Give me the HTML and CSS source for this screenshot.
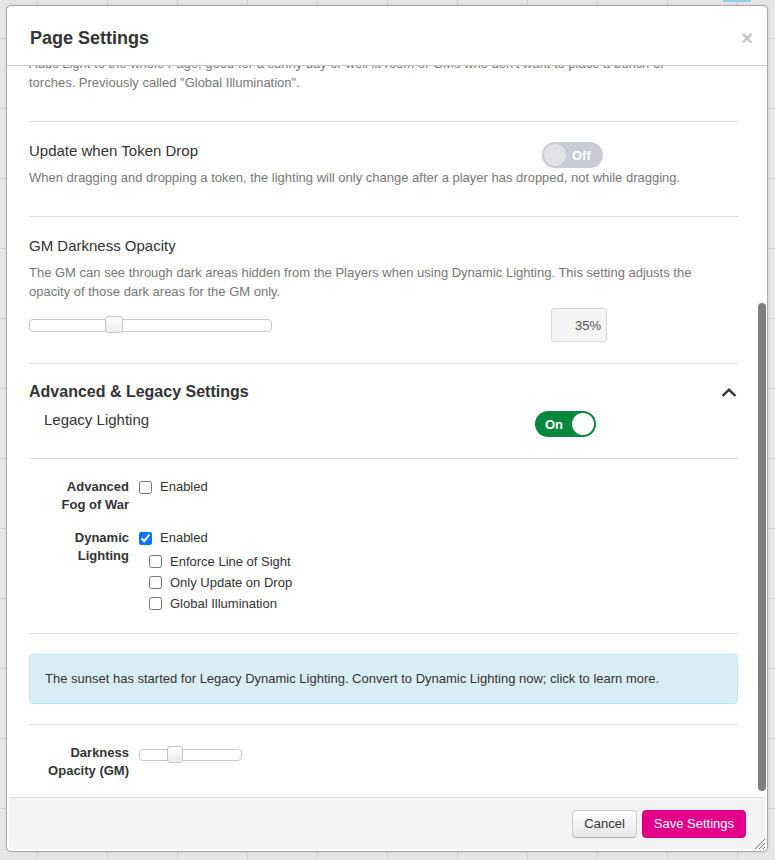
FILE: index.html
```html
<!DOCTYPE html>
<html lang="en">
<head>
  <meta charset="UTF-8" />
  <title>Page Settings</title>
  <link rel="stylesheet" href="styles.css">
</head>
<body>

  <div class="tab-mark"></div>

  <div class="dialog">
    <div class="dialog-head">
      <h1 class="dialog-title">Page Settings</h1>
      <span class="dialog-close">&times;</span>
    </div>

    <div class="dialog-body">
      <div class="scroll-content">

        <section class="setting">
          <p class="setting-desc">Adds Light to the whole Page, good for a sunny day or well lit room or GMs who don't want to place a bunch of torches. Previously called "Global Illumination".</p>
        </section>

        <section class="setting">
          <div class="setting-row">
            <h3 class="setting-title">Update when Token Drop</h3>
            <div class="toggle toggle-off"><span class="toggle-knob"></span><span class="toggle-label">Off</span></div>
          </div>
          <p class="setting-desc">When dragging and dropping a token, the lighting will only change after a player has dropped, not while dragging.</p>
        </section>

        <section class="setting">
          <div class="setting-row">
            <h3 class="setting-title">GM Darkness Opacity</h3>
          </div>
          <p class="setting-desc">The GM can see through dark areas hidden from the Players when using Dynamic Lighting. This setting adjusts the opacity of those dark areas for the GM only.</p>
          <div class="slider-row">
            <div class="slider">
              <span class="slider-handle" style="left: 35%"></span>
            </div>
            <input class="value-box" type="text" value="35%" readonly>
          </div>
        </section>

        <section class="setting">
          <div class="group-head">
            <h2 class="group-title">Advanced &amp; Legacy Settings</h2>
            <svg class="chevron" width="16" height="10" viewBox="0 0 16 10">
              <polyline points="1.5,9 8,2.6 14.5,9" fill="none" stroke="#333" stroke-width="2.4"/>
            </svg>
          </div>
          <div class="setting-row nested">
            <h3 class="setting-title">Legacy Lighting</h3>
            <div class="toggle toggle-on"><span class="toggle-label">On</span><span class="toggle-knob"></span></div>
          </div>
        </section>

        <section class="setting setting-form">
          <div class="field">
            <div class="field-label">Advanced<br>Fog of War</div>
            <div class="field-control">
              <label class="check"><input type="checkbox"> Enabled</label>
            </div>
          </div>
          <div class="field">
            <div class="field-label">Dynamic<br>Lighting</div>
            <div class="field-control">
              <label class="check"><input type="checkbox" checked> Enabled</label>
              <div class="sublist">
                <label class="check"><input type="checkbox"> Enforce Line of Sight</label>
                <label class="check"><input type="checkbox"> Only Update on Drop</label>
                <label class="check"><input type="checkbox"> Global Illumination</label>
              </div>
            </div>
          </div>
        </section>

        <section class="setting setting-alert">
          <div class="alert">The sunset has started for Legacy Dynamic Lighting. Convert to Dynamic Lighting now; click to learn more.</div>
        </section>

        <section class="setting setting-form setting-last">
          <div class="field">
            <div class="field-label">Darkness<br>Opacity (GM)</div>
            <div class="field-control">
              <div class="slider slider-sm">
                <span class="slider-handle" style="left: 35%"></span>
              </div>
            </div>
          </div>
        </section>

      </div>
      <div class="scroll-thumb"></div>
    </div>

    <div class="dialog-foot">
      <button class="btn btn-default" type="button">Cancel</button>
      <button class="btn btn-primary" type="button">Save Settings</button>
    </div>

    <svg class="resize-grip" width="12" height="12" viewBox="0 0 12 12">
      <path d="M11 1 L1 11 M11 5 L5 11 M11 9 L9 11" stroke="#777" stroke-width="1"/>
    </svg>
  </div>

</body>
</html>
```

FILE: styles.css
```css
* {
  box-sizing: border-box;
}

body {
  margin: 0;
  height: 860px;
  overflow: hidden;
  position: relative;
  font-family: "Liberation Sans", Arial, sans-serif;
  font-size: 13px;
  color: #333;
  background-color: #e6e6e6;
  background-image:
    linear-gradient(to right, #d2d2d2 1px, transparent 1px),
    linear-gradient(to bottom, #d2d2d2 1px, transparent 1px);
  background-size: 70px 70px;
  background-position: 37px 38px;
}

.tab-mark {
  position: absolute;
  top: 0;
  left: 723px;
  width: 28px;
  height: 2px;
  background: #8fd0ec;
}

.dialog {
  position: relative;
  display: flex;
  flex-direction: column;
  margin: 5px 0 0 6px;
  width: 762px;
  height: 847px;
  background: #fff;
  border: 1px solid #a8a8a8;
  border-radius: 5px;
  box-shadow: 0 0 3px rgba(0, 0, 0, 0.12);
}

.dialog-head {
  flex: none;
  height: 60px;
  display: flex;
  align-items: center;
  justify-content: space-between;
  padding: 5px 14px 0 23px;
  border-bottom: 1px solid #c8c8c8;
}

.dialog-title {
  margin: 0;
  font-size: 18px;
  font-weight: bold;
  color: #333;
}

.dialog-close {
  font-size: 20px;
  font-weight: bold;
  color: #c4c4c4;
  line-height: 1;
}

.dialog-body {
  flex: none;
  position: relative;
  height: 731px;
  overflow: hidden;
  padding: 0 29px 0 22px;
}

.scroll-content {
  margin-top: -30px;
}

.scroll-thumb {
  position: absolute;
  top: 237px;
  right: 1px;
  width: 8px;
  height: 488px;
  border-radius: 4px;
  background: #7f7f7f;
}

/* settings sections */

.setting {
  padding: 18px 0 21px;
  border-bottom: 1px solid #dddddd;
}

.setting-row {
  display: flex;
  align-items: flex-start;
  min-height: 28px;
}

.setting-row.nested {
  padding-left: 15px;
}

.setting-title {
  flex: 1;
  margin: 0;
  font-size: 15px;
  font-weight: normal;
  line-height: 22px;
  color: #333;
}

.setting-desc {
  margin: 0 0 8px;
  max-width: 680px;
  line-height: 19px;
  color: #777;
}

.group-head {
  display: flex;
  align-items: center;
  justify-content: space-between;
  margin-bottom: 7px;
}

.group-title {
  margin: 0;
  font-size: 16px;
  font-weight: bold;
  line-height: 20px;
  color: #333;
}

.chevron {
  margin-right: 1px;
}

/* toggles */

.toggle {
  display: flex;
  align-items: center;
  width: 61px;
  height: 26px;
  margin-top: 2px;
  padding: 0 2px;
  border-radius: 13px;
  font-size: 13px;
  font-weight: bold;
  color: #fff;
}

.toggle-knob {
  width: 22px;
  height: 22px;
  border-radius: 50%;
}

.toggle-off {
  margin-right: 135px;
  background: #c9ccd5;
}

.toggle-off .toggle-knob {
  background: #e1e3e9;
}

.toggle-off .toggle-label {
  margin-left: 6px;
}

.toggle-on {
  justify-content: space-between;
  margin-right: 142px;
  padding-left: 10px;
  background: #07883c;
}

.toggle-on .toggle-knob {
  background: #fff;
}

/* sliders */

.slider-row {
  display: flex;
  align-items: center;
  justify-content: space-between;
  margin-top: -1px;
}

.slider {
  position: relative;
  width: 243px;
  height: 13px;
  border: 1px solid #c9c9c9;
  border-radius: 4px;
  background: #fff;
}

.slider-sm {
  width: 103px;
  height: 12px;
  margin-top: 5px;
}

.slider-handle {
  position: absolute;
  top: -4px;
  width: 18px;
  height: 17px;
  margin-left: -9px;
  border: 1px solid #c5c5c5;
  border-radius: 3px;
  background: linear-gradient(#fdfdfd, #ececec);
}

.slider-sm .slider-handle {
  width: 16px;
  margin-left: -8px;
}

.value-box {
  width: 56px;
  height: 34px;
  margin-right: 131px;
  padding: 0 5px;
  border: 1px solid #d6d6d6;
  border-radius: 3px;
  background: #f4f4f4;
  text-align: right;
  font-family: inherit;
  font-size: 13px;
  color: #555;
}

/* form fields */

.setting-form {
  padding: 19px 0;
}

.setting-last {
  padding-bottom: 17px;
  border-bottom: 0;
}

.field {
  display: grid;
  grid-template-columns: 100px 1fr;
  column-gap: 10px;
}

.field + .field {
  margin-top: 15px;
}

.field-label {
  text-align: right;
  font-weight: bold;
  line-height: 18px;
}

.check {
  display: flex;
  align-items: center;
  gap: 8px;
  line-height: 18px;
}

.check input {
  width: 13px;
  height: 13px;
  margin: 0;
}

.sublist {
  margin-top: 4px;
  padding-left: 10px;
}

.sublist .check {
  line-height: 21px;
}

/* alert */

.setting-alert {
  padding: 20px 0;
}

.alert {
  padding: 15px;
  border: 1px solid #bce8f1;
  border-radius: 4px;
  background: #d9edf7;
  line-height: 18px;
  color: #333;
}

/* footer */

.dialog-foot {
  flex: none;
  display: flex;
  align-items: flex-start;
  justify-content: flex-end;
  gap: 5px;
  height: 52px;
  margin: 0 2px 2px;
  padding: 12px 19px 0 0;
  border-top: 1px solid #dcdcdc;
  border-radius: 0 0 4px 4px;
  background: #f3f3f3;
}

.btn {
  padding: 4px 11px;
  border: 1px solid transparent;
  border-radius: 4px;
  font-family: inherit;
  font-size: 13px;
  line-height: 18px;
  cursor: pointer;
}

.btn-default {
  color: #333;
  border-color: #ccc #ccc #b3b3b3;
  background: linear-gradient(#ffffff, #e6e6e6);
}

.btn-primary {
  color: #fff;
  border-color: #d4007f;
  background: #e3008a;
}

.resize-grip {
  position: absolute;
  right: 1px;
  bottom: 1px;
}
```
